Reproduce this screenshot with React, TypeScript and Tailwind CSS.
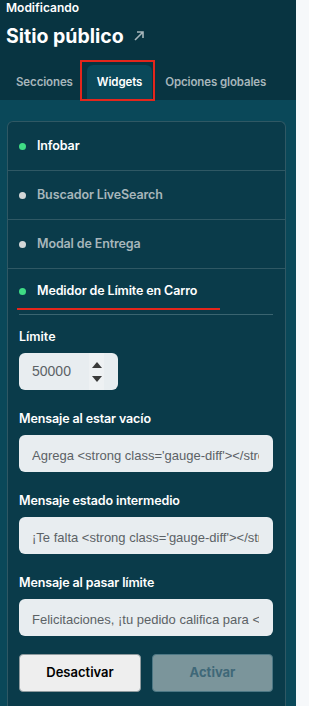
import React from 'react';

const font = { fontFamily: 'Inter, "Noto Sans", sans-serif' };
const inputFont = { fontFamily: '"Liberation Sans", Arial, sans-serif' };

type Widget = { name: string; active: boolean };

const widgets: Widget[] = [
  { name: 'Infobar', active: true },
  { name: 'Buscador LiveSearch', active: false },
  { name: 'Modal de Entrega', active: false },
];

function WidgetRow({ widget }: { widget: Widget }) {
  return (
    <div className="flex h-[49px] items-center border-b border-[#2f5864] pl-[11px]">
      <span className={`h-[7px] w-[7px] rounded-full ${widget.active ? 'bg-[#3fdc85]' : 'bg-[#d3d6d7]'}`} />
      <span
        className={`ml-[11px] text-[12.5px] font-semibold tracking-[-0.01em] ${widget.active ? 'text-white' : 'text-[#a7b6bb]'}`}
      >
        {widget.name}
      </span>
    </div>
  );
}

function TextField({ label, value }: { label: string; value: string }) {
  return (
    <div className="mt-[21px]">
      <div className="text-[12.5px] font-semibold leading-[16px] tracking-[-0.01em] text-white">{label}</div>
      <div className="mt-[8px] flex h-[37px] w-[254px] items-center rounded-md bg-[#e8edf0] pl-[13px] pr-[14px]">
        <div className="overflow-hidden">
          <span className="whitespace-nowrap text-[13px] text-[#5c6266]" style={inputFont}>
            {value}
          </span>
        </div>
      </div>
    </div>
  );
}

export default function App() {
  return (
    <div className="flex h-[706px] w-[309px] overflow-hidden bg-[#f6f8fa]" style={font}>
      <div className="flex w-[296px] flex-col bg-[#0a4859]">
        <div className="bg-[#083441] pl-[6px]">
          <div className="text-[12px] font-semibold leading-[15px] text-white">Modificando</div>
          <div className="mt-[9px] flex items-center text-[19.5px] font-bold leading-[24px] text-white">
            Sitio público
            <svg className="ml-[9px]" width="12" height="12" viewBox="0 0 12 12" fill="none">
              <path d="M2 10L10 2M4 2h6v6" stroke="#a7b6bb" strokeWidth="1.6" />
            </svg>
          </div>
          <div className="mt-[17px] flex h-[35px] items-stretch text-[11.5px] font-semibold tracking-[-0.01em]">
            <div className="flex items-center px-[10px] text-[#a7b6bb]">Secciones</div>
            <div className="relative ml-[4px] flex items-center rounded-t-md bg-[#0a4859] px-[10px] text-white">
              Widgets
              <span className="pointer-events-none absolute -bottom-[1px] -left-[7px] -right-[3px] -top-[5px] border-2 border-[#e4261c]" />
            </div>
            <div className="ml-[3px] flex items-center px-[10px] text-[#a7b6bb]">Opciones globales</div>
          </div>
        </div>

        <div className="ml-[7px] mt-[21px] w-[279px] flex-1 rounded-t-md border border-b-0 border-[#2f5864] bg-[#0a3b4a]">
          {widgets.map((w) => (
            <WidgetRow key={w.name} widget={w} />
          ))}

          <div className="px-[11px]">
            <div className="relative flex h-[45px] items-center">
              <span className="h-[7px] w-[7px] rounded-full bg-[#3fdc85]" />
              <span className="ml-[11px] text-[12.5px] font-semibold tracking-[-0.01em] text-white">
                Medidor de Límite en Carro
              </span>
              <span className="absolute bottom-[4px] -left-[2px] h-[2px] w-[203px] bg-[#e4261c]" />
            </div>
            <div className="h-px w-[254px] bg-[#3a6470]" />

            <div className="mt-[14px] text-[12.5px] font-semibold leading-[16px] text-white">Límite</div>
            <div className="mt-[8px] flex h-[37px] w-[99px] items-center justify-between overflow-hidden rounded-md bg-[#e8edf0] pl-[13px] pr-[14px]">
              <span className="text-[14px] text-[#5c6266]" style={inputFont}>
                50000
              </span>
              <div className="flex h-full w-[15px] flex-col items-center justify-center gap-[8px] bg-[#eef1f3]">
                <svg width="10" height="6" viewBox="0 0 10 6">
                  <path d="M0 6L5 0L10 6Z" fill="#3a3a3a" />
                </svg>
                <svg width="10" height="6" viewBox="0 0 10 6">
                  <path d="M0 0L5 6L10 0Z" fill="#3a3a3a" />
                </svg>
              </div>
            </div>

            <TextField label="Mensaje al estar vacío" value="Agrega <strong class='gauge-diff'></strong>" />
            <TextField label="Mensaje estado intermedio" value="¡Te falta <strong class='gauge-diff'></strong>" />
            <TextField label="Mensaje al pasar límite" value="Felicitaciones, ¡tu pedido califica para <strong>" />

            <div className="mt-[18px] flex w-[254px] justify-between">
              <button className="h-[38px] w-[122px] rounded-sm border border-[#8e9a9e] bg-[#eeeeee] text-[13px] font-semibold text-black">
                Desactivar
              </button>
              <button className="h-[38px] w-[121px] rounded-sm border border-[#4d7784] bg-[#7b959b] text-[13px] font-bold text-[#3f6878]">
                Activar
              </button>
            </div>
          </div>
        </div>
      </div>
    </div>
  );
}
